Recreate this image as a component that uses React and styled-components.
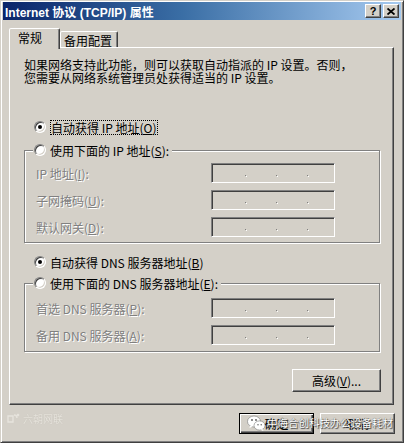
import React from 'react';
import styled, { createGlobalStyle } from 'styled-components';

const CJK = `"SimSun", "Noto Sans CJK SC", sans-serif`;

const Global = createGlobalStyle`
  html, body {
    margin: 0;
    padding: 0;
    background: #d4d0c8;
  }
  body {
    font-family: ${CJK};
    font-size: 12px;
  }
`;

// window frame
const Window = styled.div`
  position: relative;
  box-sizing: border-box;
  width: 404px;
  height: 443px;
  overflow: hidden;
  background: #d4d0c8;
  border: 1px solid;
  border-color: #d4d0c8 #404040 #404040 #d4d0c8;
  box-shadow: inset 1px 1px 0 #fff, inset -1px -1px 0 #808080;
  padding: 1px 2px 0 2px;
  display: flex;
  flex-direction: column;
`;

const TitleBar = styled.div`
  height: 18px;
  display: flex;
  align-items: center;
  padding: 0 2px 0 2px;
  background: linear-gradient(to right, #0a246a 0%, #3a6ea5 45%, #a6caf0 100%);
  color: #fff;
  font-family: "Liberation Sans", "Noto Sans CJK SC", sans-serif;
  font-weight: 700;
  font-size: 12px;
  white-space: nowrap;
`;

const TitleButtons = styled.div`
  margin-left: auto;
  display: flex;
  gap: 2px;
`;

const TitleButton = styled.div`
  box-sizing: border-box;
  width: 16px;
  height: 14px;
  background: #d4d0c8;
  border: 1px solid;
  border-color: #fff #404040 #404040 #fff;
  box-shadow: inset -1px -1px 0 #808080;
  display: flex;
  align-items: center;
  justify-content: center;
  color: #000;
  font-family: "Liberation Sans", sans-serif;
  font-weight: 700;
  font-size: 11px;
  line-height: 1;
`;

const Body = styled.div`
  padding: 8px 6px 0 6px;
  display: flex;
  flex-direction: column;
`;

const TabStrip = styled.div`
  height: 19px;
  display: flex;
  align-items: flex-end;
  position: relative;
  z-index: 1;
`;

const Tab = styled.div`
  box-sizing: border-box;
  width: ${p => (p.$active ? '51px' : '58px')};
  height: ${p => (p.$active ? '21px' : '16px')};
  margin-bottom: ${p => (p.$active ? '-2px' : '0')};
  padding: ${p => (p.$active ? '2px 0 0 8px' : '2px 0 0 3px')};
  background: #d4d0c8;
  border: 1px solid;
  border-bottom: none;
  border-color: #fff #404040 transparent #fff;
  border-radius: 2px 2px 0 0;
  box-shadow: inset -1px 0 0 #808080;
  line-height: 13px;
  color: #000;
`;

const Panel = styled.div`
  box-sizing: border-box;
  width: 385px;
  height: 358px;
  border: 1px solid;
  border-color: #fff #404040 #404040 #fff;
  box-shadow: inset -1px -1px 0 #808080;
  padding: 10px 12px 0 14px;
  display: flex;
  flex-direction: column;
`;

const Intro = styled.p`
  margin: 0;
  line-height: 13px;
  color: #000;
`;

const RadioRow = styled.div`
  margin-top: ${p => p.$top}px;
  height: 16px;
  padding-left: 10px;
  display: flex;
  align-items: center;
  gap: 4px;
  line-height: 13px;
`;

const Radio = styled.span`
  position: relative;
  flex: none;
  box-sizing: border-box;
  width: 12px;
  height: 12px;
  border-radius: 50%;
  background: #fff;
  border: 1px solid;
  border-color: #808080 #fff #fff #808080;
  box-shadow: inset 1px 1px 0 #404040, inset -1px -1px 0 #d4d0c8;

  &::after {
    content: '';
    display: ${p => (p.$checked ? 'block' : 'none')};
    position: absolute;
    left: 3px;
    top: 3px;
    width: 4px;
    height: 4px;
    border-radius: 50%;
    background: #000;
  }
`;

const FocusText = styled.span`
  padding: 1px 1px 1px 1px;
  outline: 1px dotted #000;
  outline-offset: -1px;
`;

const Key = styled.u`
  text-decoration: underline;
  text-underline-offset: 1px;
`;

const GroupBox = styled.div`
  margin-top: ${p => p.$top}px;
  margin-right: 1px;
  border: 1px solid #808080;
  box-shadow: inset 1px 1px 0 #fff, 1px 1px 0 #fff;
  padding: 0 0 ${p => p.$bottom}px 0;
  display: flex;
  flex-direction: column;
`;

const GroupHeader = styled.div`
  margin: -9px 0 0 8px;
  align-self: flex-start;
  height: 16px;
  padding: 0 3px 0 1px;
  background: #d4d0c8;
  display: flex;
  align-items: center;
  gap: 4px;
  line-height: 13px;
`;

const Fields = styled.div`
  margin-top: ${p => p.$top}px;
  padding-left: 11px;
  display: flex;
  flex-direction: column;
  gap: 7px;
`;

const FieldRow = styled.div`
  height: 20px;
  display: flex;
  align-items: center;
`;

const FieldLabel = styled.span`
  width: 175px;
  color: #808080;
  text-shadow: 1px 1px 0 #fff;
  line-height: 13px;
`;

const IpBox = styled.div`
  box-sizing: border-box;
  width: 124px;
  height: 20px;
  background: #d4d0c8;
  border: 1px solid;
  border-color: #808080 #fff #fff #808080;
  box-shadow: inset 1px 1px 0 #404040, inset -1px -1px 0 #d4d0c8;
  display: flex;
  align-items: flex-start;
  padding: 11px 0 0 33px;
  gap: 30px;
`;

const Dot = styled.span`
  width: 1px;
  height: 1px;
  background: #808080;
  box-shadow: 1px 1px 0 #fff;
`;

const Button = styled.div`
  box-sizing: border-box;
  width: ${p => p.$w}px;
  height: ${p => p.$h}px;
  display: flex;
  align-items: center;
  justify-content: center;
  background: #d4d0c8;
  border: 1px solid;
  border-color: ${p => (p.$default ? '#000' : '#fff #404040 #404040 #fff')};
  box-shadow: ${p =>
    p.$default
      ? 'inset 1px 1px 0 #fff, inset -1px -1px 0 #404040, inset -2px -2px 0 #808080'
      : 'inset -1px -1px 0 #808080'};
  line-height: 13px;
  color: #000;
`;

const AdvancedButton = styled(Button)`
  align-self: flex-end;
  margin: 17px 0 0 0;
`;

const ButtonRow = styled.div`
  margin-top: 8px;
  display: flex;
  justify-content: flex-end;
  gap: 6px;
`;

// watermarks baked into the screenshot
const WeChatMark = styled.div`
  position: absolute;
  left: 246px;
  top: 413px;
  display: flex;
  align-items: center;
  gap: 1px;
  color: #fff;
  font-family: "Noto Sans CJK SC", sans-serif;
  font-size: 10.6px;
  line-height: 18px;
  letter-spacing: -0.1px;
  text-shadow: 0 0 1px #333, 1px 1px 1px #444;
  white-space: nowrap;
`;

const SiteMark = styled.div`
  position: absolute;
  left: 6px;
  top: 411px;
  display: flex;
  align-items: center;
  gap: 2px;
  color: #e9e6df;
  font-family: "Noto Sans CJK SC", sans-serif;
  font-size: 10px;
  line-height: 14px;
  text-shadow: 0 0 1px #b8b4ac;
  opacity: 0.9;
`;

const IpField = () => (
  <IpBox>
    <Dot />
    <Dot />
    <Dot />
  </IpBox>
);

export default function App() {
  return (
    <>
      <Global />
      <Window>
        <TitleBar>
          <span>Internet 协议 (TCP/IP) 属性</span>
          <TitleButtons>
            <TitleButton>?</TitleButton>
            <TitleButton>
              <svg width="8" height="7" viewBox="0 0 8 7">
                <path d="M0.5 0.5 L7.5 6.5 M7.5 0.5 L0.5 6.5" stroke="#000" strokeWidth="1.8" />
              </svg>
            </TitleButton>
          </TitleButtons>
        </TitleBar>

        <Body>
          <TabStrip>
            <Tab $active>常规</Tab>
            <Tab>备用配置</Tab>
          </TabStrip>

          <Panel>
            <Intro>
              如果网络支持此功能，则可以获取自动指派的 IP 设置。否则，
              <br />
              您需要从网络系统管理员处获得适当的 IP 设置。
            </Intro>

            <RadioRow $top={35}>
              <Radio $checked />
              <FocusText>
                自动获得 IP 地址(<Key>O</Key>)
              </FocusText>
            </RadioRow>

            <GroupBox $top={15} $bottom={5}>
              <GroupHeader>
                <Radio />
                <span>
                  使用下面的 IP 地址(<Key>S</Key>):
                </span>
              </GroupHeader>
              <Fields $top={5}>
                <FieldRow>
                  <FieldLabel>
                    IP 地址(<Key>I</Key>):
                  </FieldLabel>
                  <IpField />
                </FieldRow>
                <FieldRow>
                  <FieldLabel>
                    子网掩码(<Key>U</Key>):
                  </FieldLabel>
                  <IpField />
                </FieldRow>
                <FieldRow>
                  <FieldLabel>
                    默认网关(<Key>D</Key>):
                  </FieldLabel>
                  <IpField />
                </FieldRow>
              </Fields>
            </GroupBox>

            <RadioRow $top={11}>
              <Radio $checked />
              <span>
                自动获得 DNS 服务器地址(<Key>B</Key>)
              </span>
            </RadioRow>

            <GroupBox $top={13} $bottom={6}>
              <GroupHeader>
                <Radio />
                <span>
                  使用下面的 DNS 服务器地址(<Key>E</Key>):
                </span>
              </GroupHeader>
              <Fields $top={7}>
                <FieldRow>
                  <FieldLabel>
                    首选 DNS 服务器(<Key>P</Key>):
                  </FieldLabel>
                  <IpField />
                </FieldRow>
                <FieldRow>
                  <FieldLabel>
                    备用 DNS 服务器(<Key>A</Key>):
                  </FieldLabel>
                  <IpField />
                </FieldRow>
              </Fields>
            </GroupBox>

            <AdvancedButton $w={89} $h={23}>
              高级(<Key>V</Key>)...
            </AdvancedButton>
          </Panel>

          <ButtonRow>
            <Button $w={75} $h={21} $default>
              确定
            </Button>
            <Button $w={75} $h={21}>
              取消
            </Button>
          </ButtonRow>
        </Body>

        <SiteMark>
          <svg width="14" height="12" viewBox="0 0 14 12">
            <path d="M1 3 h5 v6 h-5z M7 2 c2 0 3 1 3 3" fill="none" stroke="#e9e6df" strokeWidth="1.4" />
            <circle cx="11" cy="2" r="1.3" fill="#e9e6df" />
          </svg>
          <span>六朝网联</span>
        </SiteMark>

        <WeChatMark>
          <svg width="19" height="17" viewBox="0 0 19 17">
            <ellipse cx="7" cy="6.5" rx="6.5" ry="5.5" fill="#fff" stroke="#777" strokeWidth="0.6" />
            <path d="M3 10.5 L2.5 13 L5.5 11.5z" fill="#fff" />
            <ellipse cx="12.5" cy="10.5" rx="5.5" ry="4.6" fill="#fff" stroke="#777" strokeWidth="0.6" />
            <path d="M15.5 14 L16.5 16 L13.5 14.8z" fill="#fff" />
            <circle cx="5" cy="5" r="0.9" fill="#555" />
            <circle cx="9" cy="5" r="0.9" fill="#555" />
            <circle cx="11" cy="9.8" r="0.7" fill="#555" />
            <circle cx="14.2" cy="9.8" r="0.7" fill="#555" />
          </svg>
          <span>中海合创科技办公设备耗材</span>
        </WeChatMark>
      </Window>
    </>
  );
}
